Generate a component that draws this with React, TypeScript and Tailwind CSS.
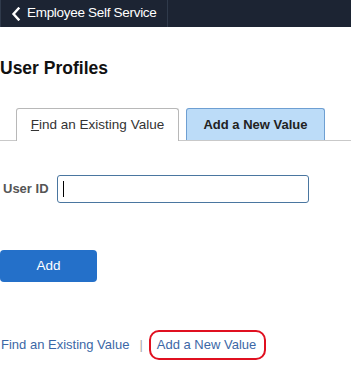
import React from "react"

export default function App() {
    return (
        <div className="w-[351px] h-[391px] bg-white overflow-hidden font-['Liberation_Sans',Arial,sans-serif]">
            {/* banner */}
            <div className="h-[27px] bg-[#1c2433] flex">
                <div className="h-full w-[168px] border-l border-r border-[#2f3a4b] flex items-center pl-[10px] gap-[6px]">
                    <svg width="10" height="14" viewBox="0 0 10 14" fill="none">
                        <path d="M7.5 1.5 L2.5 7 L7.5 12.5" stroke="#ffffff" strokeWidth="2.4" strokeLinecap="square" />
                    </svg>
                    <span className="text-white text-[13.5px] tracking-[-0.3px]">Employee Self Service</span>
                </div>
            </div>

            <h1 className="mt-[31px] text-[17.5px] font-bold text-[#111] leading-[21px]">User Profiles</h1>

            {/* tabs */}
            <div className="mt-[29px] flex items-end border-b border-[#c9c9c9] h-[33px]">
                <div className="ml-[16px] w-[163px] h-[33px] -mb-px bg-white border border-b-0 border-[#b8b8b8] rounded-t-[3px] flex items-center justify-center text-[13.5px] text-[#333]">
                    <span><span className="underline">F</span>ind an Existing Value</span>
                </div>
                <div className="ml-[7px] w-[139px] h-[32px] bg-[#bcdcf8] border border-b-0 border-[#6e9fd2] rounded-t-[3px] flex items-center justify-center text-[13px] font-bold text-[#222]">
                    Add a New Value
                </div>
            </div>

            {/* field */}
            <div className="mt-[34px] flex items-center">
                <label className="w-[57px] pl-[3px] text-[13px] font-bold text-[#555]">User ID</label>
                <div className="w-[252px] h-[28px] border border-[#4a76a0] rounded-[3px] flex items-center pl-[5px]">
                    <div className="w-px h-[16px] bg-black" />
                </div>
            </div>

            <button className="mt-[47px] w-[97px] h-[32px] rounded-[4px] bg-[#2470c9] text-white text-[13.5px] flex items-center justify-center">
                Add
            </button>

            {/* footer links */}
            <div className="mt-[50px] flex items-center text-[13px] text-[#3c67a6]">
                <span className="pl-[1px]">Find an Existing Value</span>
                <span className="ml-[10px] text-[#aaa]">|</span>
                <span className="ml-[7px] relative px-[7px] py-[3px]">
                    Add a New Value
                    <span className="absolute -inset-y-[2px] -left-[1px] -right-[3px] border-2 border-[#e01020] rounded-[10px]" />
                </span>
            </div>
        </div>
    )
}
